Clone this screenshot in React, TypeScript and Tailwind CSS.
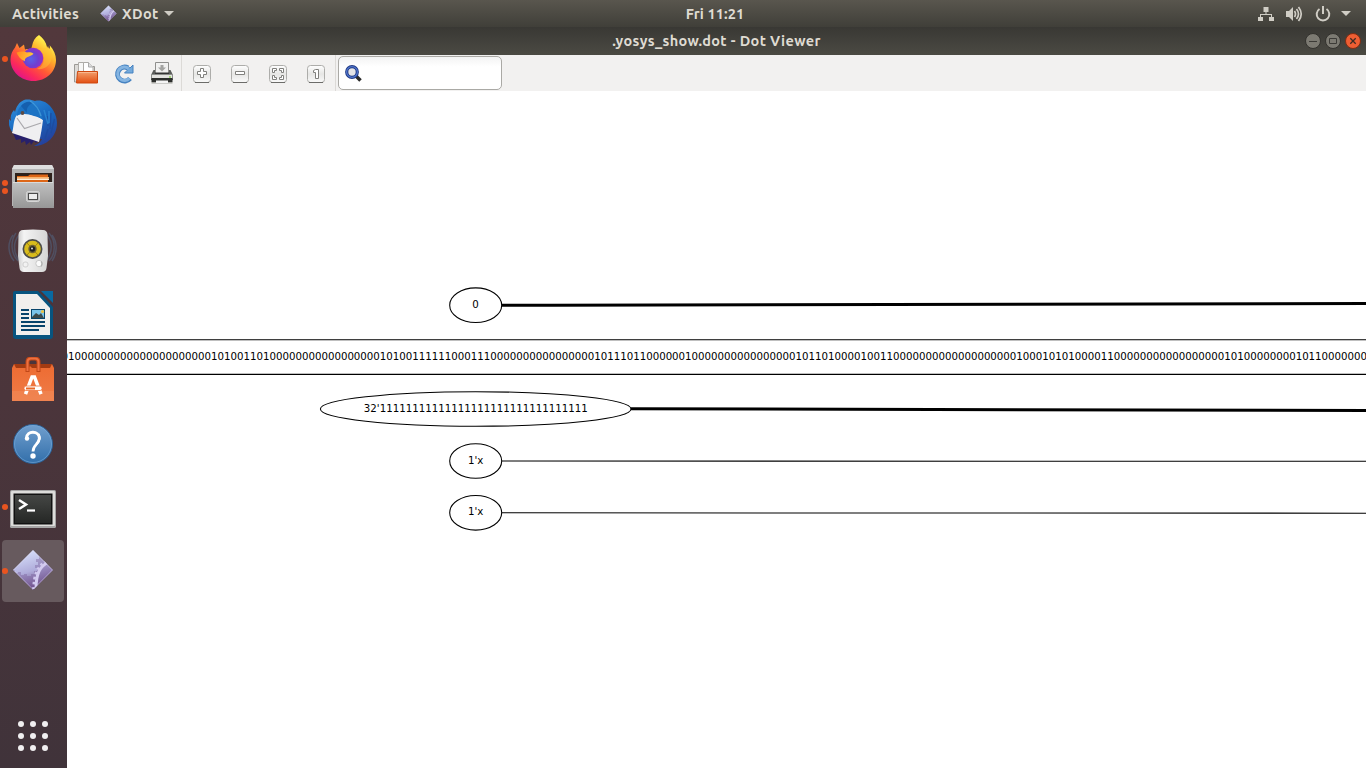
import React from "react";

const UI_FONT = "font-['Ubuntu','Open_Sans','Noto_Sans',sans-serif]";

const zeros = (n: number) => "0".repeat(n);

const MEMORY_BITS = [
  "01", zeros(21), "10100", "1101", zeros(17), "10100", "111111", "000", "111",
  zeros(16), "10111011", zeros(6), "1", zeros(16), "1011010000100", "11",
  zeros(19), "10001010100", "0011", zeros(17), "101", zeros(8), "1011", zeros(8),
].join("");

function XDotIcon({ size }: { size: number }) {
  return (
    <svg width={size} height={size} viewBox="0 0 42 42">
      <defs>
        <linearGradient id="xd" x1="0.2" y1="0" x2="0.5" y2="1">
          <stop offset="0.1" stopColor="#d3daf7" />
          <stop offset="0.55" stopColor="#b0addb" />
          <stop offset="1" stopColor="#66407c" />
        </linearGradient>
        <clipPath id="xdc"><path d="M21 1 41 21 21 41 1 21Z" /></clipPath>
      </defs>
      <path d="M21 1 41 21 21 41 1 21Z" fill="url(#xd)" />
      <g clipPath="url(#xdc)">
        <path d="M0 21h3v3h3v-1h3v3h3v-1h3v2h4v-2h3v-3h3v-3h-2v-3h3v-3h-2v-3h3V5h16v37H0Z" fill="#7a5f9a" opacity="0.42" />
        <path d="M37 13C28 17 24 24 24 40" fill="none" stroke="#d3cbf0" strokeWidth="3" />
        <path d="M35 12C25 17 22 25 21.500 40" fill="none" stroke="#d0c8ee" strokeWidth="2.600" strokeDasharray="2.600 2.600" />
      </g>
      <path d="M21 1.600 40.400 21 21 40.400 1.600 21Z" fill="none" stroke="#e0dcf2" strokeOpacity="0.45" strokeWidth="1" />
    </svg>
  );
}

function FirefoxIcon() {
  return (
    <svg width="48" height="48" viewBox="0 0 48 48">
      <defs>
        <linearGradient id="ff" x1="0.85" y1="0.1" x2="0.25" y2="0.95">
          <stop offset="0.05" stopColor="#fff44f" />
          <stop offset="0.32" stopColor="#ffb02a" />
          <stop offset="0.6" stopColor="#ff5a35" />
          <stop offset="0.82" stopColor="#fb2a5b" />
          <stop offset="1" stopColor="#e31587" />
        </linearGradient>
        <radialGradient id="ffg" cx="0.4" cy="0.55" r="0.65">
          <stop offset="0" stopColor="#5a62e8" />
          <stop offset="0.55" stopColor="#6f3fd0" />
          <stop offset="1" stopColor="#a02bc4" />
        </radialGradient>
        <linearGradient id="fff" x1="0" y1="0" x2="1" y2="0.3">
          <stop offset="0" stopColor="#ff8a1c" />
          <stop offset="1" stopColor="#ffc83c" />
        </linearGradient>
      </defs>
      <path d="M30 1c4 3 7 7 8 12l3 2c0-2 0-3-.5-4C45 16 47 21 47 26c0 12-10 21-22.500 21S1.500 37.500 1.500 25.500c0-5 2-9 4.500-12L8 9l2.500 5L15 10.500l1 5c2-.500 4-.700 6 .3L23 12c1-5 3-8.500 7-11Z" fill="url(#ff)" />
      <circle cx="24" cy="24" r="10.300" fill="url(#ffg)" />
      <path d="M7.500 18.500c4-1.500 8-1 10.500 0 2-.5 4.500-.2 6.500 1.200-1.800 1.900-4.100 2.400-6 3.300-2.500 1.200-3 2.500-2.500 4.300-3-1.500-6-3-8.500-8.800Z" fill="url(#fff)" />
      <path d="M26 15c5-.5 8.500 3 9 8s-2 10-7 12c8 1 14-4 15-12 .5-5-1-8-4-11-3 3-8 3-13 3Z" fill="#ffc331" opacity="0.5" />
    </svg>
  );
}

function ThunderbirdIcon() {
  return (
    <svg width="50" height="50" viewBox="0 0 50 50">
      <defs>
        <linearGradient id="tb" x1="0.2" y1="0" x2="0.8" y2="1">
          <stop offset="0" stopColor="#2f8ddb" />
          <stop offset="0.5" stopColor="#1766bd" />
          <stop offset="1" stopColor="#273c98" />
        </linearGradient>
      </defs>
      <path d="M16 2c4-1 8 0 11 1 4-1 7 0 10 1 7 4 12 13 12 21 0 13-10 23-23 23 4-2 7-4 8-7L8 38c-4-3-6-7-7-11v-6l2 2c-1-4 0-8 3-11l1 2c1-5 4-10 9-12Z" fill="url(#tb)" />
      <path d="m4 33 28 9-4 3-2-2-3 4-1-3-4 3-1-4-4 2 0-4-5 1Z" fill="#27206b" />
      <path d="M8.500 17.500C15 15 21 16 26 18c4 1 7 2 9 4-1 7-2 15-4 22L4 35c2-6 1-12 4.500-17.500Z" fill="#efeff1" />
      <path d="m9 20 7.500 10.500L33 25" fill="none" stroke="#aaa9ad" strokeWidth="1.200" />
      <path d="M9 18c0-6 3-11 9-13 4-1 9 1 13 6 2 3 3 6 4 11-5-4-9-5-12-5-5-2-9-2-14 1Z" fill="#1c73c4" />
      <path d="M13 8c4-5 9-5 12-3-5 2-7 6-6 10" fill="#155fae" />
      <circle cx="14.500" cy="15" r="1.900" fill="#5c4a44" />
      <path d="M22 3c5 3 9 8 11 15" fill="none" stroke="#63bdec" strokeWidth="1.400" opacity=".45" />
      <path d="m39 18 1 10M43 15l-1 16M46.500 21 43 35M40 31l-3 10" fill="none" stroke="#1b4a9d" strokeWidth="1.400" opacity=".8" />
      <path d="m36 12 4 14M41 13l0 12" stroke="#2c8bd6" strokeWidth="1.500" opacity=".8" />
    </svg>
  );
}

function FilesIcon() {
  return (
    <svg width="44" height="46" viewBox="0 0 44 46">
      <defs>
        <linearGradient id="fl" x1="0" y1="0" x2="0" y2="1">
          <stop offset="0" stopColor="#c0c0c0" /><stop offset="1" stopColor="#979797" />
        </linearGradient>
      </defs>
      <path d="M3 1h38l2 4v37H1V5Z" fill="#b5b5b5" />
      <path d="M3 1h38l2 4H1Z" fill="#dedede" />
      <rect x="4" y="9" width="37" height="10" fill="#2e211b" />
      <path d="M6 12h11l2-1.500h18V19H6Z" fill="#dd6617" />
      <rect x="6" y="13" width="32" height="1.500" fill="#f8b36c" />
      <rect x="6" y="14.500" width="32" height="1.500" fill="#fff0d8" />
      <path d="M2 18h40l1 26H2Z" fill="url(#fl)" />
      <path d="M2 18.500h40" stroke="#dadada" />
      <rect x="15.500" y="27.500" width="13" height="10" rx="1.800" fill="#bdbdbd" stroke="#d6d6d6" />
      <rect x="17.500" y="29.500" width="9" height="6" fill="#ececec" stroke="#4b4b4b" />
    </svg>
  );
}

function RhythmboxIcon() {
  return (
    <svg width="50" height="46" viewBox="0 0 50 46">
      <defs>
        <linearGradient id="rb" x1="0" y1="0" x2="1" y2="0">
          <stop offset="0" stopColor="#cdcdcd" /><stop offset="0.2" stopColor="#f4f4f4" /><stop offset="1" stopColor="#d5d5d5" />
        </linearGradient>
      </defs>
      <g fill="none" stroke="#516785" strokeWidth="1.500" opacity=".5">
        <path d="M8 5C2 13 3 26 10 33M5 7C-1 15 0 26 6 33M11 7c-6 7-6 17 0 25M41 5c7 8 7 21 0 28M44 7c6 8 5 19 0 26M39 7c6 8 5 17 0 25" />
      </g>
      <path d="M15 2Q25 1 35 2q4 0 4.500 4.500L40 28l-1.500 12q-.5 4-4.500 4H16q-4 0-4.500-4L10 28l.5-21.500Q11 2 15 2Z" fill="url(#rb)" />
      <circle cx="24.500" cy="21" r="10" fill="#4c4c4a" />
      <circle cx="24.500" cy="21" r="8.300" fill="#d8bb1c" />
      <path d="m19 15 11 12M19 27l11-12" stroke="#a48709" strokeWidth="1" />
      <circle cx="24.500" cy="21" r="4.200" fill="#6d6034" />
      <circle cx="24.500" cy="21" r="2.700" fill="#202020" />
      <circle cx="24" cy="20.500" r="1" fill="#ddd" />
      <circle cx="31" cy="35.500" r="3.200" fill="#fafafa" stroke="#c9c9c9" />
      <path d="M33 33.500q2 2 0 5" fill="none" stroke="#b1b1b1" strokeWidth="1.300" />
      <rect x="15" y="34" width="5" height="5" rx="2" fill="none" stroke="#d0d0d0" />
    </svg>
  );
}

function WriterIcon() {
  return (
    <svg width="42" height="50" viewBox="0 0 42 50">
      <path d="M3 1h24l14 14v31q0 3-3 3H4q-3 0-3-3V3q0-2 2-2Z" fill="#07547f" />
      <path d="M4 4h21l13 14v27H4Z" fill="#f0efed" />
      <path d="M26 1h3l12 13v3Z" fill="#4a343b" />
      <path d="M29 1h12v12Z" fill="#0969a0" />
      <g fill="#07446b">
        <path d="M9 19h8v2H9zM9 23h8v2H9zM9 27h8v2H9zM9 31h24v2H9zM9 35h24v2H9zM9 39h18v2H9z" />
        <rect x="19" y="19" width="14" height="10" />
      </g>
      <path d="M20 20h12v8H20z" fill="#7bc4eb" /><path d="m20 27 4-4 3 2 2-2 3 5H20Z" fill="#3e4a4b" /><circle cx="30.500" cy="21.500" r="1.600" fill="#efc340" />
    </svg>
  );
}

function SoftwareIcon() {
  return (
    <svg width="44" height="45" viewBox="0 0 44 45">
      <defs><linearGradient id="sw" x1="0" y1="0" x2="0" y2="1"><stop offset="0" stopColor="#ed6b31" /><stop offset="1" stopColor="#ef7c48" /></linearGradient></defs>
      <path d="M3 7h38v8H3Z" fill="#a33b12" />
      <path d="m1 11 2-4 2 4h12l2-2 2 2h18l2-4 2 4v33H1Z" fill="url(#sw)" />
      <path d="M1 34h42v10H1Z" fill="#f08957" opacity=".6" />
      <path d="M16.500 15V5q0-3.500 3.500-3.500h4q3.500 0 3.500 3.500v10" fill="none" stroke="#c04717" strokeWidth="4" />
      <path d="M16.500 14V5q0-3.500 3.500-3.500h4q3.500 0 3.500 3.500v9" fill="none" stroke="#ed7040" strokeWidth="2" />
      <path d="m14.500 37 6.500-17h2.500L30 37" fill="none" stroke="#fff" strokeWidth="3.500" />
      <rect x="13" y="29" width="18" height="4.500" rx="2" fill="#fff" stroke="#ee7640" strokeWidth=".8" />
      <path d="M15 30.500h9v2h-9z" fill="#e96929" />
    </svg>
  );
}

function HelpIcon() {
  return (
    <svg width="42" height="42" viewBox="0 0 42 42">
      <defs><linearGradient id="hp" x1="0" y1="0" x2="0" y2="1"><stop offset="0" stopColor="#719fce" /><stop offset="1" stopColor="#326faa" /></linearGradient></defs>
      <circle cx="21" cy="21" r="19.500" fill="url(#hp)" stroke="#2c6095" />
      <circle cx="21" cy="21" r="18.500" fill="none" stroke="#77aada" strokeOpacity=".6" />
      <path d="M14.500 15c0-8 13-7.500 12.800.5-.3 6-6.300 6-6.300 13" fill="none" stroke="#fff" strokeWidth="2.800" />
      <path d="M26.500 11c2 4 1 7-2 10" fill="none" stroke="#fff" strokeWidth="2.500" />
      <circle cx="15" cy="15.500" r="2.200" fill="#fff" /><circle cx="21" cy="33" r="2.700" fill="#fff" />
    </svg>
  );
}

function TerminalIcon() {
  return (
    <svg width="46" height="40" viewBox="0 0 46 40">
      <defs><linearGradient id="tm" x1="0" y1="0" x2="0" y2="1"><stop offset="0" stopColor="#454745" /><stop offset="1" stopColor="#252725" /></linearGradient></defs>
      <rect x="0" y="1" width="46" height="38" rx="1.500" fill="#a6a6a6" />
      <rect x="1" y="2" width="44" height="35" rx="1" fill="#dddddb" />
      <rect x="3.500" y="4.500" width="39" height="31" fill="#111" />
      <rect x="5" y="6" width="36" height="28" fill="url(#tm)" />
      <path d="m9 11 7 4.500L9 20" fill="none" stroke="#fff" strokeWidth="2.500" />
      <path d="M17 21.500h8" stroke="#fff" strokeWidth="2.200" />
    </svg>
  );
}

function OpenIcon() {
  return (
    <svg width="26" height="24" viewBox="0 0 26 24">
      <defs><linearGradient id="op" x1="0" y1="0" x2="0" y2="1"><stop offset="0" stopColor="#f3a06d" /><stop offset="1" stopColor="#e34f12" /></linearGradient></defs>
      <path d="M1.500 3.500h5l1 2h14v15.500h-20Z" fill="#dddbd8" stroke="#9b9995" />
      <path d="M5.500 18V1.500h8l1.500 2V18Z" fill="#f7f7f6" stroke="#aeaca8" />
      <path d="M10.500 18V1.500h5l4.500 4.500V18Z" fill="#fff" stroke="#aeaca8" /><path d="M15.500 1.500V6h4.500" fill="#ddd" stroke="#aaa" />
      <path d="M4.500 10.500h20V22H3.500Z" fill="url(#op)" stroke="#cf480f" />
      <path d="M5.500 11.500h18" stroke="#f8b890" />
    </svg>
  );
}

function ReloadIcon() {
  return (
    <svg width="22" height="22" viewBox="0 0 22 22">
      <path d="M17 15.500A7 7 0 1 1 15 5" fill="none" stroke="#4682c0" strokeWidth="5" />
      <path d="M20 2v8h-8.500l2.800-2.800-3-3 4-.200 1.700 1Z" fill="#73a9db" stroke="#4682c0" />
      <path d="M16.500 15.300A6.800 6.800 0 1 1 15.500 5.300" fill="none" stroke="#84b4e1" strokeWidth="3" />
    </svg>
  );
}

function PrintIcon() {
  return (
    <svg width="24" height="24" viewBox="0 0 24 24">
      <path d="M5 9h-1.500L1 14v5h22v-5L20.500 9H19v3H5Z" fill="#5a5c5a" />
      <path d="M5.500 12.500V1.500h13v11" fill="#f1f1f0" stroke="#8f8f8d" />
      <path d="M10.500 4h3v2.500h2.500L12 10.500 8 6.500h2.500Z" fill="#a3a3a1" />
      <path d="M1.500 13.500h21v4h-21Z" fill="#e3e3e0" stroke="#8a8c89" />
      <path d="M5 11.500h14v1.500H5z" fill="#333" />
      <path d="M1.500 17h21v4h-21z" fill="#2d2f2d" /><path d="M1.500 21h21v1.500h-21z" fill="#a4a4a0" /><path d="M6 19.500h12V22H6z" fill="#f4f4f4" />
      <path d="M19 16h2" stroke="#92d65a" strokeWidth="1.500" />
    </svg>
  );
}

function ZoomTool({ children }: { children: React.ReactNode }) {
  return (
    <svg width="20" height="20" viewBox="0 0 20 20">
      <defs><linearGradient id="zb" x1="0" y1="0" x2="0" y2="1"><stop offset="0" stopColor="#fff" /><stop offset="0.5" stopColor="#e6e6e4" /><stop offset="1" stopColor="#fafafa" /></linearGradient></defs>
      <rect x="1.500" y="1.500" width="17" height="17" rx="3" fill="url(#zb)" stroke="#adadaa" />
      <path d="M3 18.500h14" stroke="#6c6c69" />
      <g fill="#fff" stroke="#80807d" strokeWidth="1">{children}</g>
    </svg>
  );
}

function TopBar() {
  return (
    <header className="flex h-[27px] shrink-0 items-center bg-linear-to-b from-[#59564e] to-[#403f39] text-[14.5px] font-semibold text-[#dfdbd2]">
      <div className="flex flex-1 items-center pl-3">
        <span className="w-[88px] tracking-[0.25px]">Activities</span>
        <XDotIcon size={17} />
        <span className="ml-[5px] w-[38px] tracking-[0.4px]">XDot</span>
        <svg className="ml-1" width="10" height="6" viewBox="0 0 10 6"><path d="M0 0h10L5 5Z" fill="#cfccc4" /></svg>
      </div>
      <div className="ml-[67px] whitespace-nowrap tracking-[0.1px]">Fri 11:21</div>
      <div className="flex flex-1 items-center justify-end pr-[15px]">
        <svg width="16" height="16" viewBox="0 0 16 16" fill="#d0cdc5"><path d="M5.500 1h5v5h-2v2H14v3h2v4h-5v-4h2V9H3v2h2v4H0v-4h2V8h5.500V6h-2Z" /></svg>
        <svg className="ml-3" width="17" height="16" viewBox="0 0 17 16" fill="none" stroke="#d0cdc5" strokeWidth="1.700"><path d="M0 5h3l4-4v14l-4-4H0Z" fill="#d0cdc5" stroke="none" /><path d="M8.500 5q2 3 0 6M10.500 3q4 5 0 10M12.500 1q5.500 7 0 14" /></svg>
        <svg className="ml-3" width="16" height="16" viewBox="0 0 16 16" fill="none" stroke="#d0cdc5" strokeWidth="2"><path d="M4.500 3a6.300 6.300 0 1 0 7 0M8 0v8" /></svg>
        <svg className="ml-2.5" width="10" height="6" viewBox="0 0 10 6"><path d="M0 0h10L5 5Z" fill="#d0cdc5" /></svg>
      </div>
    </header>
  );
}

function LaunchItem({ dots = 0, active = false, children }: { dots?: number; active?: boolean; children: React.ReactNode }) {
  return (
    <div className="relative flex h-16 w-full shrink-0 items-center justify-center">
      {active && <div className="absolute left-0.5 top-px h-[62px] w-[62px] rounded bg-[#675a5e]" />}
      <div className="absolute left-0.5 top-0 flex h-full flex-col items-center justify-center gap-0.5">
        {Array.from({ length: dots }, (_, i) => <span key={i} className="size-1.5 rounded-full bg-[#e95420]" />)}
      </div>
      <div className="relative -left-[0.5px]">{children}</div>
    </div>
  );
}

function Dock() {
  return (
    <aside className="flex w-[67px] shrink-0 flex-col bg-linear-to-b from-[#52383c] via-[#4b353b] to-[#40333a]">
      <LaunchItem dots={1}><div className="mb-0.5"><FirefoxIcon /></div></LaunchItem>
      <LaunchItem><ThunderbirdIcon /></LaunchItem>
      <LaunchItem dots={2}><FilesIcon /></LaunchItem>
      <LaunchItem><RhythmboxIcon /></LaunchItem>
      <LaunchItem><WriterIcon /></LaunchItem>
      <LaunchItem><SoftwareIcon /></LaunchItem>
      <LaunchItem><div className="mt-0.5"><HelpIcon /></div></LaunchItem>
      <LaunchItem dots={1}><div className="mt-[3px]"><TerminalIcon /></div></LaunchItem>
      <LaunchItem dots={1} active><div className="mb-0.5"><XDotIcon size={42} /></div></LaunchItem>
      <div className="mb-[17px] ml-[18px] mt-auto grid w-[30px] grid-cols-3 gap-1.5">
        {Array.from({ length: 9 }, (_, i) => <span key={i} className="size-1.5 rounded-full bg-[#f0eff0]" />)}
      </div>
    </aside>
  );
}

function TitleBar() {
  return (
    <div className="grid h-7 shrink-0 grid-cols-[1fr_auto_1fr] items-center bg-linear-to-b from-[#393834] to-[#4b4a43] text-[14.5px] font-bold text-[#dfdbd2]">
      <span />
      <span className="whitespace-nowrap tracking-[0.36px]">.yosys_show.dot - Dot Viewer</span>
      <div className="flex justify-end gap-1 pr-[5px]">
        <svg width="16" height="16" viewBox="0 0 16 16"><circle cx="8" cy="8" r="7.500" fill="#7c7a72" stroke="#33322e" /><path d="M4 8.500h8" stroke="#3c3b37" /></svg>
        <svg width="16" height="16" viewBox="0 0 16 16"><circle cx="8" cy="8" r="7.500" fill="#7c7a72" stroke="#33322e" /><path d="M4.500 5.500h7v5h-7Z" fill="none" stroke="#3c3b37" /></svg>
        <svg width="16" height="16" viewBox="0 0 16 16"><circle cx="8" cy="8" r="7.500" fill="#ee5e33" stroke="#7e2d13" /><path d="m5.300 5.300 5.400 5.400m0-5.400-5.400 5.400" stroke="#3c2b23" strokeWidth="1.300" /></svg>
      </div>
    </div>
  );
}

function Toolbar() {
  return (
    <div className="flex h-9 shrink-0 items-center bg-[#f2f1f0]">
      <div className="flex h-full w-[115px] items-center border-r border-[#dcdad7]">
        <div className="flex w-[38px] justify-center"><OpenIcon /></div>
        <div className="flex w-[38px] justify-center pt-0.5"><ReloadIcon /></div>
        <div className="flex w-[38px] justify-center"><PrintIcon /></div>
      </div>
      <div className="flex h-full w-[154px] items-center gap-[18px] border-r border-[#dcdad7] pl-2.5 pt-px">
        <ZoomTool><path d="M8.500 4.500h3v3h3v3h-3v3h-3v-3h-3v-3h3Z" /></ZoomTool>
        <ZoomTool><path d="M5.500 7.500h9v3h-9Z" /></ZoomTool>
        <ZoomTool><path d="M4.500 4.500h4v2h-2v2h-2ZM11.500 4.500h4v4h-2v-2h-2ZM4.500 11.500h2v2h2v2h-4ZM13.500 11.500h2v4h-4v-2h2Z" /></ZoomTool>
        <ZoomTool><path d="M9.500 5.500h3v9h-3v-6h-2v-2Z" /></ZoomTool>
      </div>
      <div className="ml-0.5 flex h-[34px] w-[164px] items-center rounded-[5px] border border-[#aaa9a5] bg-linear-to-b from-[#f3f3f3] to-white to-30% pl-1.5">
        <svg width="17" height="17" viewBox="0 0 17 17"><path d="m11 11 4.500 4.500" stroke="#292929" strokeWidth="3.500" /><circle cx="7" cy="7" r="5.300" fill="#e3e4e8" stroke="#203a83" strokeWidth="3.200" /><circle cx="7" cy="7" r="5.400" fill="none" stroke="#4f74cd" strokeWidth="1.300" /></svg>
      </div>
    </div>
  );
}

function Graph() {
  return (
    <svg className="block min-h-0 w-full flex-1 bg-white" viewBox="67 91 1299 677" preserveAspectRatio="xMinYMin slice">
      <g fill="none" stroke="#000" strokeWidth="1.080">
        <ellipse cx="475.700" cy="305.200" rx="26" ry="17.300" />
        <ellipse cx="475.700" cy="409" rx="155.300" ry="17.300" />
        <ellipse cx="475.700" cy="461" rx="26" ry="17.300" />
        <ellipse cx="475.700" cy="512.800" rx="26" ry="17.300" />
        <path d="M67 339.800H1366M67 374.400H1366" />
        <path d="M502 461 1366 461.300M502 512.800 1366 513.200" />
      </g>
      <g fill="none" stroke="#000" strokeWidth="3"><path d="M502 305.200C800 305.200 1100 304.500 1366 303.500M631 408.700C900 408.900 1150 410 1366 410.500" /></g>
      <g className="font-['DejaVu_Sans',sans-serif]" fontSize="10.240" fill="#000" textAnchor="middle">
        <text x="475.500" y="308">0</text>
        <text x="61.600" y="360" textAnchor="start" textLength={MEMORY_BITS.length * 6.495}>{MEMORY_BITS}</text>
        <text x="475.800" y="412" textLength="224">32'11111111111111111111111111111111</text>
        <text x="475.700" y="464">1'x</text>
        <text x="475.700" y="515.300">1'x</text>
      </g>
    </svg>
  );
}

export default function App() {
  return (
    <div className={`flex h-screen w-screen flex-col overflow-hidden ${UI_FONT}`}>
      <TopBar />
      <div className="flex min-h-0 flex-1">
        <Dock />
        <main className="flex min-w-0 flex-1 flex-col">
          <TitleBar />
          <Toolbar />
          <Graph />
        </main>
      </div>
    </div>
  );
}
